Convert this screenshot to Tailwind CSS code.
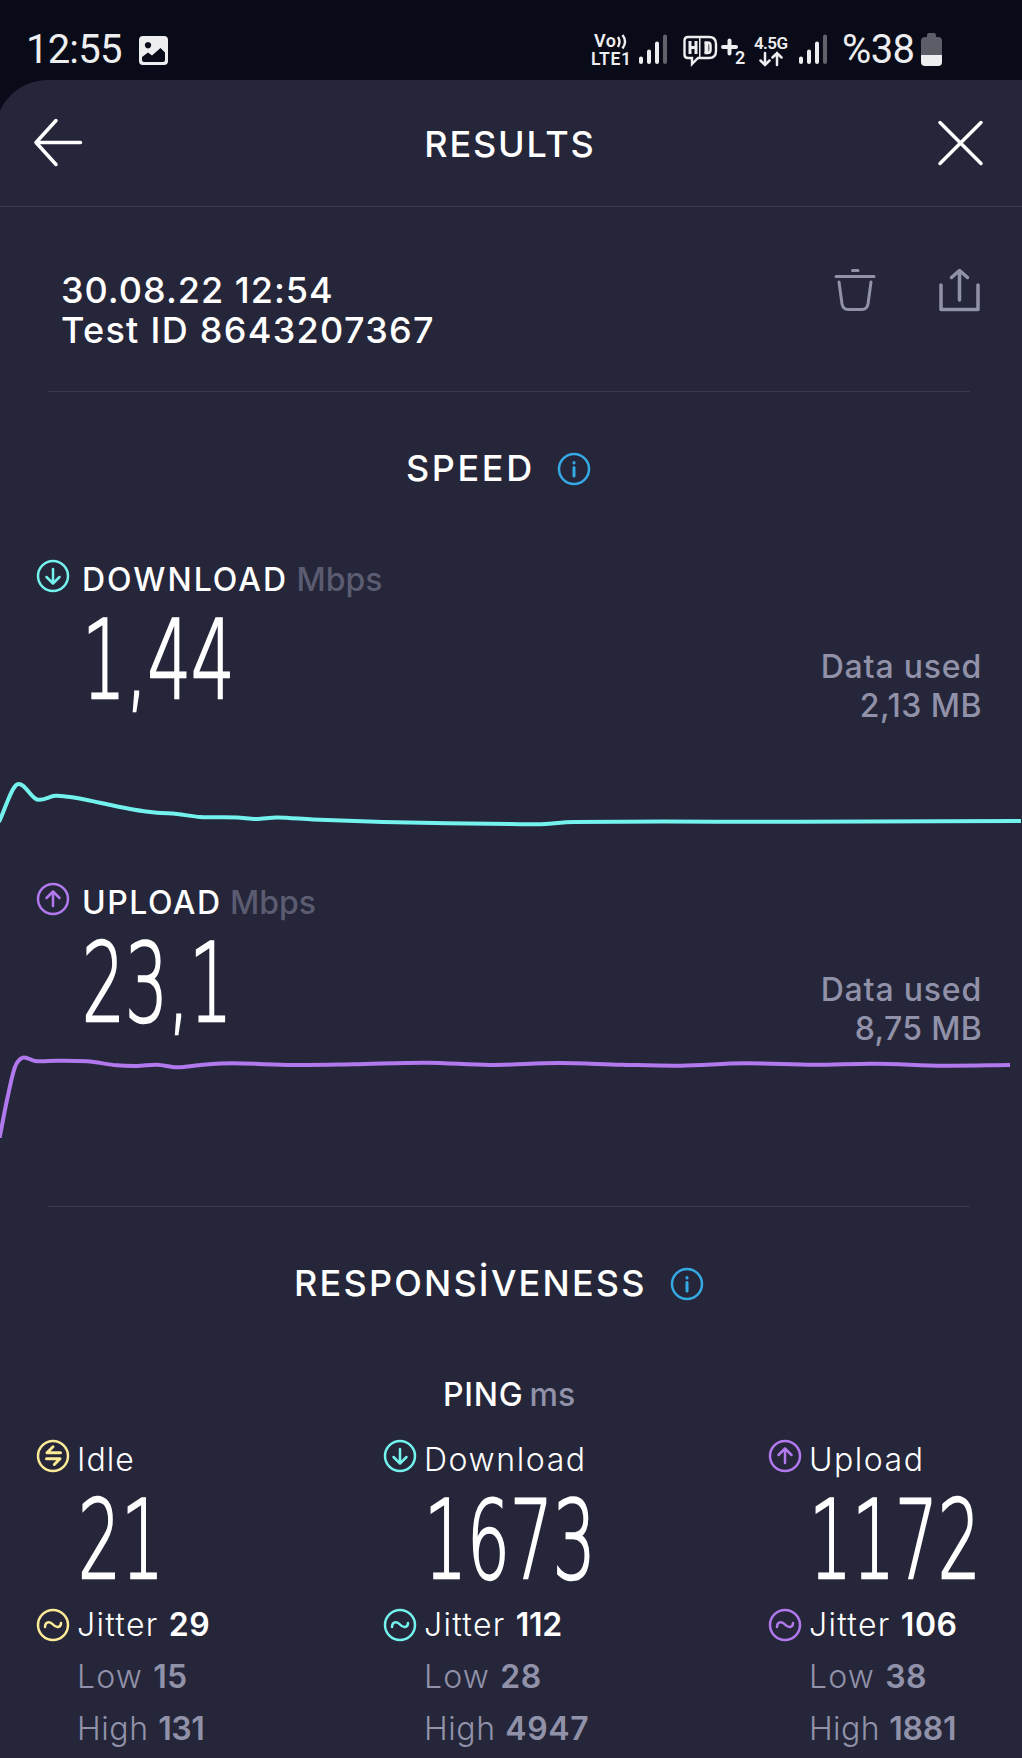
<!DOCTYPE html>
<html lang="en">
  <head>
    <meta charset="UTF-8" />
    <title>Results</title>
    <script src="https://cdn.jsdelivr.net/npm/@tailwindcss/browser@4"></script>
  </head>
  <body class="overflow-x-hidden bg-[#090b18] font-['Inter',sans-serif] text-white">
    <!-- Shared icons -->
    <svg class="hidden">
      <symbol id="icon-down" viewBox="0 0 34 34">
        <circle cx="17" cy="17" r="15" />
        <path d="M17 10v14M10.500 18l6.500 6.500 6.500-6.500" />
      </symbol>
      <symbol id="icon-up" viewBox="0 0 34 34">
        <circle cx="17" cy="17" r="15" />
        <path d="M17 24V10M10.500 16l6.500-6.500 6.500 6.500" />
      </symbol>
      <symbol id="icon-idle" viewBox="0 0 34 34">
        <circle cx="17" cy="17" r="15" />
        <path d="M24.500 13.800H11L17 7.800M10.500 19.800H24L18.300 25.500" stroke-width="3" />
      </symbol>
      <symbol id="icon-jitter" viewBox="0 0 34 34">
        <circle cx="17" cy="17" r="15" />
        <path d="M9 19c0-5 4.500-6.500 8-2.500s8 3 8-1.500" />
      </symbol>
      <symbol id="icon-info" viewBox="0 0 34 34">
        <circle cx="17" cy="17" r="15" />
        <path d="M17 15.500v8.500M17 10.500v.5" stroke-width="3" />
      </symbol>
      <symbol id="icon-signal" viewBox="0 0 28 30">
        <path d="M2 24.500V28M10 17.500V28M18 9.500V28" />
        <path d="M26 2.500V28" stroke="#62626c" />
      </symbol>
    </svg>

    <!-- Status bar -->
    <div class="flex h-20 items-start pt-[33px] pl-[26px] font-['Roboto',sans-serif] text-[#eeeef0]">
      <span class="w-[113px] text-[40px] leading-[33px] tracking-[-0.8px]">12:55</span>
      <svg class="mt-[3px] size-[29px]" viewBox="0 0 29 29">
        <path fill="#eeeef0" fill-rule="evenodd" d="M4 0h21a4 4 0 0 1 4 4v21a4 4 0 0 1-4 4H4a4 4 0 0 1-4-4V4a4 4 0 0 1 4-4zM9 6a3.200 3.200 0 1 0 .01 0zM3 21v3q0 2 2 2h19q2 0 2-2v-7.500l-4.500-4.500-8.500 7.500-4-3z" />
      </svg>
      <svg class="ml-[424px] h-9 w-[42px] overflow-visible" viewBox="0 0 42 36" fill="#eeeef0">
        <text x="2" y="14" font-size="18" font-weight="600" textLength="22">Vo</text>
        <text x="-1" y="32" font-size="17.500" font-weight="600" textLength="40">LTE1</text>
        <path d="M26 4q3 4.500 0 10M30.500 2q5 6.500 0 13.500" fill="none" stroke="#eeeef0" stroke-width="2.400" />
      </svg>
      <svg class="mt-[1px] ml-[5px] h-[30px] w-7" fill="none" stroke="#eeeef0" stroke-width="4" stroke-linecap="round"><use href="#icon-signal" /></svg>
      <svg class="ml-[15px] h-9 w-[64px]" viewBox="0 0 64 36" fill="none" stroke="#eeeef0">
        <path stroke-width="2.400" d="M6 4h21q7 0 7 7v7q0 7-7 7H16l-6 6v-6H6q-3.500 0-3.500-3.500V7.500Q2.500 4 6 4z" />
        <path stroke-width="3" d="M8 8v13M14 8v13M8 14.500h6" />
        <path stroke-width="1.500" d="M17.800 5v19" />
        <path stroke-width="4" d="M24.500 9.500v10.500" />
        <path stroke-width="2.500" d="M22.500 9.500h3q3 0 3 3v4.500q0 3-3 3h-3" />
        <path stroke-width="4" stroke-linecap="round" d="M41 14h13M47.500 7.500v13" />
        <text x="53" y="31" font-size="18" font-weight="600" fill="#eeeef0" stroke="none">2</text>
      </svg>
      <svg class="ml-[8px] h-9 w-[38px] overflow-visible" viewBox="0 0 38 36" fill="none" stroke="#eeeef0" stroke-width="2.500">
        <text x="0" y="16" font-size="17" font-weight="600" fill="#eeeef0" stroke="none" textLength="34">4.5G</text>
        <path stroke-linecap="round" d="M11 20v12M6.500 27.500l4.500 4.500 4.500-4.500M23 32V20M18.500 24.500l4.500-4.500 4.500 4.500" />
      </svg>
      <svg class="mt-[1px] ml-[7px] h-[30px] w-7" fill="none" stroke="#eeeef0" stroke-width="4" stroke-linecap="round"><use href="#icon-signal" /></svg>
      <span class="ml-[15px] w-[79px] text-[40px] leading-[33px] tracking-[-0.6px]">%38</span>
      <svg class="h-[33px] w-[21px]" viewBox="0 0 21 33">
        <path fill="#5d5d68" d="M6 4V2q0-2 2-2h5q2 0 2 2v2h2q4 0 4 4v14H0V8q0-4 4-4z" />
        <path fill="#eeeef0" d="M0 22h21v7q0 4-4 4H4q-4 0-4-4z" />
      </svg>
    </div>

    <div class="-ml-[5px] h-[1678px] overflow-hidden rounded-tl-[53px] bg-[#252639] pl-[5px]">
      <!-- Header -->
      <header class="flex h-[127px] items-center justify-between border-b border-[#38394e] pr-[38px] pl-[33px]">
        <svg class="size-[50px]" viewBox="0 0 50 50" fill="none" stroke="#fff" stroke-width="3.500" stroke-linecap="round" stroke-linejoin="round">
          <path d="M47.500 24.500H3M23 2.500L3 24.500l20 22" />
        </svg>
        <h1 class="pt-[2px] pl-px text-[36px] leading-10 font-[550] tracking-[1.8px]">RESULTS</h1>
        <svg class="size-12" viewBox="0 0 48 48" fill="none" stroke="#fff" stroke-width="3.500" stroke-linecap="round">
          <path d="M4 3.500l41 41M45 3.500l-41 41" />
        </svg>
      </header>

      <!-- Test info -->
      <section class="mr-[52px] ml-12 flex h-[185px] border-b border-[#38394e] pt-[63px] pl-[13px]">
        <div class="grow text-[36px] leading-10 font-[550]">
          <p class="tracking-[1px]">30.08.22 12:54</p>
          <p class="tracking-[1.3px]">Test ID 8643207367</p>
        </div>
        <div class="-mr-[12px] flex gap-[61px]">
          <svg class="-mt-[2px] size-11" viewBox="0 0 44 44" fill="none" stroke="#9192a9" stroke-width="3" stroke-linecap="round" stroke-linejoin="round">
            <path d="M19.500 2.500h5.500M3 8.500h38M6 14l3 22q1 5.500 6 5.500h14q5 0 6-5.500l3-22" />
          </svg>
          <svg class="-mt-[2px] size-11" viewBox="0 0 44 44" fill="none" stroke="#9192a9" stroke-width="3.500" stroke-linecap="round" stroke-linejoin="round">
            <path d="M3 17v24.500h37V17M21.500 32V3M13.500 9.500l8-7 8 7" />
          </svg>
        </div>
      </section>

      <!-- Speed -->
      <section>
        <div class="mt-14 flex h-10 items-center pl-[406px]">
          <h2 class="w-[151px] text-[36px] leading-10 font-[550] tracking-[2.6px]">SPEED</h2>
          <svg class="mt-px size-[34px]" fill="none" stroke="#35a9e4" stroke-width="2.500" stroke-linecap="round"><use href="#icon-info" /></svg>
        </div>

        <div class="mt-[71px] flex h-10 pl-9">
          <svg class="size-[34px]" fill="none" stroke="#74f3ee" stroke-width="2.500" stroke-linecap="round" stroke-linejoin="round"><use href="#icon-down" /></svg>
          <p class="ml-3 text-[32px] leading-[41px] font-medium"><span class="tracking-[2px]">DOWNLOAD</span> <span class="text-[#5b5c71]">Mbps</span></p>
        </div>
        <div class="flex h-[171px] justify-between pr-10 pl-[82px]">
          <p class="h-[118px] origin-left scale-x-[0.635] pt-[6px] font-['DejaVu_Sans',sans-serif] text-[108px] leading-[112px] font-extralight [-webkit-text-stroke:2.5px_white]">1,44</p>
          <div class="pt-[48px] text-right text-[32px] leading-[39px] font-medium text-[#9192a9]">
            <p class="tracking-[0.8px]">Data used</p>
            <p class="tracking-[0.5px]">2,13 MB</p>
          </div>
        </div>
        <svg id="download-chart" class="h-[60px] w-full" fill="none" stroke="#74f3ee" stroke-width="4" stroke-linejoin="round"></svg>

        <div class="mt-[52px] flex h-10 pl-9">
          <svg class="size-[34px]" fill="none" stroke="#b278ee" stroke-width="2.500" stroke-linecap="round" stroke-linejoin="round"><use href="#icon-up" /></svg>
          <p class="ml-3 text-[32px] leading-[41px] font-medium"><span class="tracking-[1.5px]">UPLOAD</span> <span class="text-[#5b5c71]">Mbps</span></p>
        </div>
        <div class="flex h-[126px] justify-between pr-10 pl-[82px]">
          <p class="h-[118px] origin-left scale-x-[0.625] pt-[6px] font-['DejaVu_Sans',sans-serif] text-[108px] leading-[112px] font-extralight [-webkit-text-stroke:2.5px_white]">23,1</p>
          <div class="pt-[48px] text-right text-[32px] leading-[39px] font-medium text-[#9192a9]">
            <p class="tracking-[0.8px]">Data used</p>
            <p class="tracking-[0.3px]">8,75 MB</p>
          </div>
        </div>
        <svg id="upload-chart" class="h-[90px] w-full" fill="none" stroke="#b278ee" stroke-width="4" stroke-linejoin="round"></svg>
      </section>

      <!-- Responsiveness -->
      <section>
        <div class="mt-[68px] mr-[52px] ml-12 border-b border-[#38394e]"></div>
        <div class="mt-14 flex h-10 items-center pl-[294px]">
          <h2 class="w-[376px] text-[36px] leading-10 font-[550] tracking-[2.2px]">RESPONSİVENESS</h2>
          <svg class="mt-px size-[34px]" fill="none" stroke="#35a9e4" stroke-width="2.500" stroke-linecap="round"><use href="#icon-info" /></svg>
        </div>
        <p class="mt-[72px] pl-[443px] text-[32px] leading-10 font-medium"><span class="tracking-[0.8px]">PING</span><span class="ml-[6px] text-[#9192a9]">ms</span></p>

        <div class="mt-[24px] grid grid-cols-[347px_385px_1fr] pl-9 text-[32px] font-light">
          <div>
            <div class="flex h-[42px]">
              <svg class="size-[34px]" fill="none" stroke="#fbeb97" stroke-width="2.500" stroke-linecap="round" stroke-linejoin="round"><use href="#icon-idle" /></svg>
              <span class="ml-[7px] leading-[41px] tracking-[1px]">Idle</span>
            </div>
            <p class="ml-[42px] h-[126px] w-max origin-left scale-x-[0.625] pt-1 font-['DejaVu_Sans',sans-serif] text-[108px] leading-[112px] font-extralight [-webkit-text-stroke:2.5px_white]">21</p>
            <div class="flex h-9 items-center">
              <svg class="size-[34px]" fill="none" stroke="#fbeb97" stroke-width="2.500" stroke-linecap="round"><use href="#icon-jitter" /></svg>
              <span class="ml-[7px] tracking-[1.3px]">Jitter <b class="font-semibold tracking-[0.5px]">29</b></span>
            </div>
            <div class="pt-2 pl-[41px] leading-[52px] text-[#9192a9]">
              <p class="tracking-[1.2px]">Low <b class="font-semibold tracking-normal">15</b></p>
              <p class="tracking-[0.6px]">High <b class="font-semibold tracking-[-0.5px]">131</b></p>
            </div>
          </div>
          <div>
            <div class="flex h-[42px]">
              <svg class="size-[34px]" fill="none" stroke="#74f3ee" stroke-width="2.500" stroke-linecap="round" stroke-linejoin="round"><use href="#icon-down" /></svg>
              <span class="ml-[7px] leading-[41px] tracking-[1.6px]">Download</span>
            </div>
            <p class="ml-[41px] h-[126px] w-max origin-left scale-x-[0.625] pt-1 font-['DejaVu_Sans',sans-serif] text-[108px] leading-[112px] font-extralight [-webkit-text-stroke:2.5px_white]">1673</p>
            <div class="flex h-9 items-center">
              <svg class="size-[34px]" fill="none" stroke="#74f3ee" stroke-width="2.500" stroke-linecap="round"><use href="#icon-jitter" /></svg>
              <span class="ml-[7px] tracking-[1.3px]">Jitter <b class="font-semibold tracking-[-0.3px]">112</b></span>
            </div>
            <div class="pt-2 pl-[41px] leading-[52px] text-[#9192a9]">
              <p class="tracking-[1.2px]">Low <b class="font-semibold tracking-[0.5px]">28</b></p>
              <p class="tracking-[0.6px]">High <b class="font-semibold tracking-[0.6px]">4947</b></p>
            </div>
          </div>
          <div>
            <div class="flex h-[42px]">
              <svg class="size-[34px]" fill="none" stroke="#b278ee" stroke-width="2.500" stroke-linecap="round" stroke-linejoin="round"><use href="#icon-up" /></svg>
              <span class="ml-[7px] leading-[41px] tracking-[1.5px]">Upload</span>
            </div>
            <p class="ml-[41px] h-[126px] w-max origin-left scale-x-[0.625] pt-1 font-['DejaVu_Sans',sans-serif] text-[108px] leading-[112px] font-extralight [-webkit-text-stroke:2.5px_white]">1172</p>
            <div class="flex h-9 items-center">
              <svg class="size-[34px]" fill="none" stroke="#b278ee" stroke-width="2.500" stroke-linecap="round"><use href="#icon-jitter" /></svg>
              <span class="ml-[7px] tracking-[1.3px]">Jitter <b class="font-semibold tracking-[0.5px]">106</b></span>
            </div>
            <div class="pt-2 pl-[41px] leading-[52px] text-[#9192a9]">
              <p class="tracking-[1.2px]">Low <b class="font-semibold tracking-[0.3px]">38</b></p>
              <p class="tracking-[0.4px]">High <b class="font-semibold tracking-[-0.3px]">1881</b></p>
            </div>
          </div>
        </div>
      </section>
    </div>

    <script>
      const download = [
        [-1, 52], [17, 14.5], [37, 29.5], [55.5, 25.7], [75, 27.7], [100, 32.7],
        [133, 39.5], [157, 42.7], [177, 44], [200, 47], [237, 47.5], [256, 49],
        [277, 47.5], [313, 49.5], [383, 52], [447, 53.3], [511, 54], [538, 54.3],
        [574, 52], [798, 51.7], [1021, 51],
      ];
      const upload = [
        [-1, 93], [7, 52], [15, 19], [23, 9.7], [35, 13], [57, 12.7], [87, 13.3],
        [117, 17.3], [137, 18], [157, 16.7], [177, 19.3], [203, 16.7],
        [233, 15.3], [293, 17], [353, 16.3], [427, 14.7], [490, 17], [558, 15],
        [621, 16.7], [681, 17.7], [744, 15.3], [814, 16.7], [874, 15.7],
        [944, 17.7], [1010, 17],
      ];

      // Smooth curve through all samples
      function drawChart(id, pts) {
        let d = "M" + pts[0];
        for (let i = 0; i < pts.length - 1; i++) {
          const [x1, y1] = pts[i];
          const [x2, y2] = pts[i + 1];
          const [x0, y0] = pts[i - 1] || pts[i];
          const [x3, y3] = pts[i + 2] || pts[i + 1];
          const t = (x2 - x1) / 3;
          const m1 = (y2 - y0) / (x2 - x0);
          const m2 = (y3 - y1) / (x3 - x1);
          d += ` C${x1 + t} ${y1 + m1 * t} ${x2 - t} ${y2 - m2 * t} ${x2} ${y2}`;
        }
        document.getElementById(id).innerHTML = `<path d="${d}" />`;
      }

      drawChart("download-chart", download);
      drawChart("upload-chart", upload);
    </script>
  </body>
</html>
